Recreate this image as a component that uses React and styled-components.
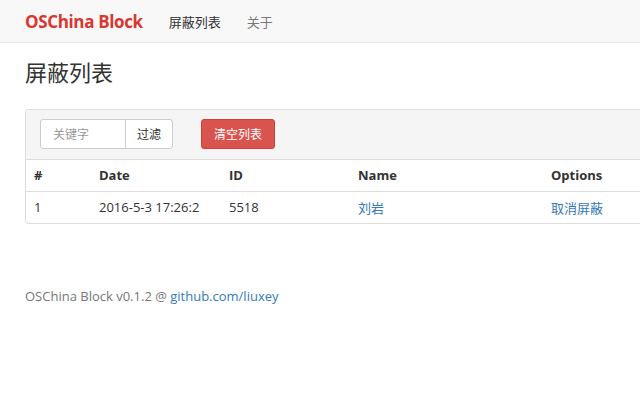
import React from 'react';
import styled, { createGlobalStyle } from 'styled-components';

const GlobalStyle = createGlobalStyle`
  html, body {
    margin: 0;
    padding: 0;
    background: #fff;
    overflow: hidden;
  }
  body {
    font-family: "Open Sans", "Noto Sans CJK SC", sans-serif;
    font-size: 13px;
    color: #333;
  }
`;

const Navbar = styled.div`
  height: 42px;
  background: #f8f8f8;
  border-bottom: 1px solid #e7e7e7;
  display: flex;
  align-items: center;
  padding: 0 25px;
`;

const Brand = styled.a`
  font-size: 17px;
  font-weight: bold;
  color: #d9362f;
  margin-right: 26px;
  text-decoration: none;
  letter-spacing: -0.35px;
`;

const NavLink = styled.a`
  font-size: 13px;
  color: ${p => (p.active ? '#333' : '#777')};
  margin-right: 26px;
  text-decoration: none;
`;

const Container = styled.div`
  padding: 0 25px;
  width: 720px;
`;

const Title = styled.h1`
  font-size: 22px;
  font-weight: normal;
  margin: 15px 0 23px;
  line-height: 28px;
  color: #333;
`;

const Panel = styled.div`
  border: 1px solid #ddd;
  border-radius: 3px;
  overflow: hidden;
`;

const PanelHeading = styled.div`
  background: #f5f5f5;
  padding: 9px 14px 10px;
  border-bottom: 1px solid #ddd;
  display: flex;
  align-items: center;
`;

const InputGroup = styled.div`
  display: flex;
  margin-right: 28px;
`;

const Input = styled.input`
  box-sizing: border-box;
  width: 86px;
  height: 30px;
  border: 1px solid #ccc;
  border-radius: 3px 0 0 3px;
  padding: 0 12px;
  font-family: inherit;
  font-size: 12px;
  &::placeholder { color: #999; }
`;

const Button = styled.button`
  box-sizing: border-box;
  height: 30px;
  padding: 0 ${p => (p.danger ? '12px' : '11px')};
  font-family: inherit;
  font-size: 12px;
  border: 1px solid ${p => (p.danger ? '#d43f3a' : '#ccc')};
  background: ${p => (p.danger ? '#d9534f' : '#fff')};
  color: ${p => (p.danger ? '#fff' : '#333')};
  border-radius: ${p => (p.attached ? '0 3px 3px 0' : '3px')};
  margin-left: ${p => (p.attached ? '-1px' : '0')};
`;

const Table = styled.table`
  width: 100%;
  border-collapse: collapse;
  table-layout: fixed;
`;

const Th = styled.th`
  text-align: left;
  font-weight: bold;
  padding: 0 8px 1px;
  height: 30px;
  border-bottom: 1px solid #ddd;
`;

const Td = styled.td`
  padding: 0 8px 1px;
  height: 30px;
`;

const Link = styled.a`
  color: #337ab7;
  text-decoration: none;
`;

const Footer = styled.p`
  margin: 63px 0 0;
  color: #777;
  font-size: 13px;
`;

const rows = [{ date: '2016-5-3 17:26:2', id: '5518', name: '刘岩' }];

export default function App() {
  return (
    <>
      <GlobalStyle />
      <Navbar>
        <Brand>OSChina Block</Brand>
        <NavLink active>屏蔽列表</NavLink>
        <NavLink>关于</NavLink>
      </Navbar>
      <Container>
        <Title>屏蔽列表</Title>
        <Panel>
          <PanelHeading>
            <InputGroup>
              <Input placeholder="关键字" />
              <Button attached>过滤</Button>
            </InputGroup>
            <Button danger>清空列表</Button>
          </PanelHeading>
          <Table>
            <colgroup>
              <col style={{ width: 65 }} />
              <col style={{ width: 130 }} />
              <col style={{ width: 129 }} />
              <col style={{ width: 193 }} />
              <col />
            </colgroup>
            <thead>
              <tr>
                <Th>#</Th>
                <Th>Date</Th>
                <Th>ID</Th>
                <Th>Name</Th>
                <Th>Options</Th>
              </tr>
            </thead>
            <tbody>
              {rows.map((r, i) => (
                <tr key={i}>
                  <Td>{i + 1}</Td>
                  <Td>{r.date}</Td>
                  <Td>{r.id}</Td>
                  <Td><Link>{r.name}</Link></Td>
                  <Td><Link>取消屏蔽</Link></Td>
                </tr>
              ))}
            </tbody>
          </Table>
        </Panel>
        <Footer>
          OSChina Block v0.1.2 @ <Link>github.com/liuxey</Link>
        </Footer>
      </Container>
    </>
  );
}
